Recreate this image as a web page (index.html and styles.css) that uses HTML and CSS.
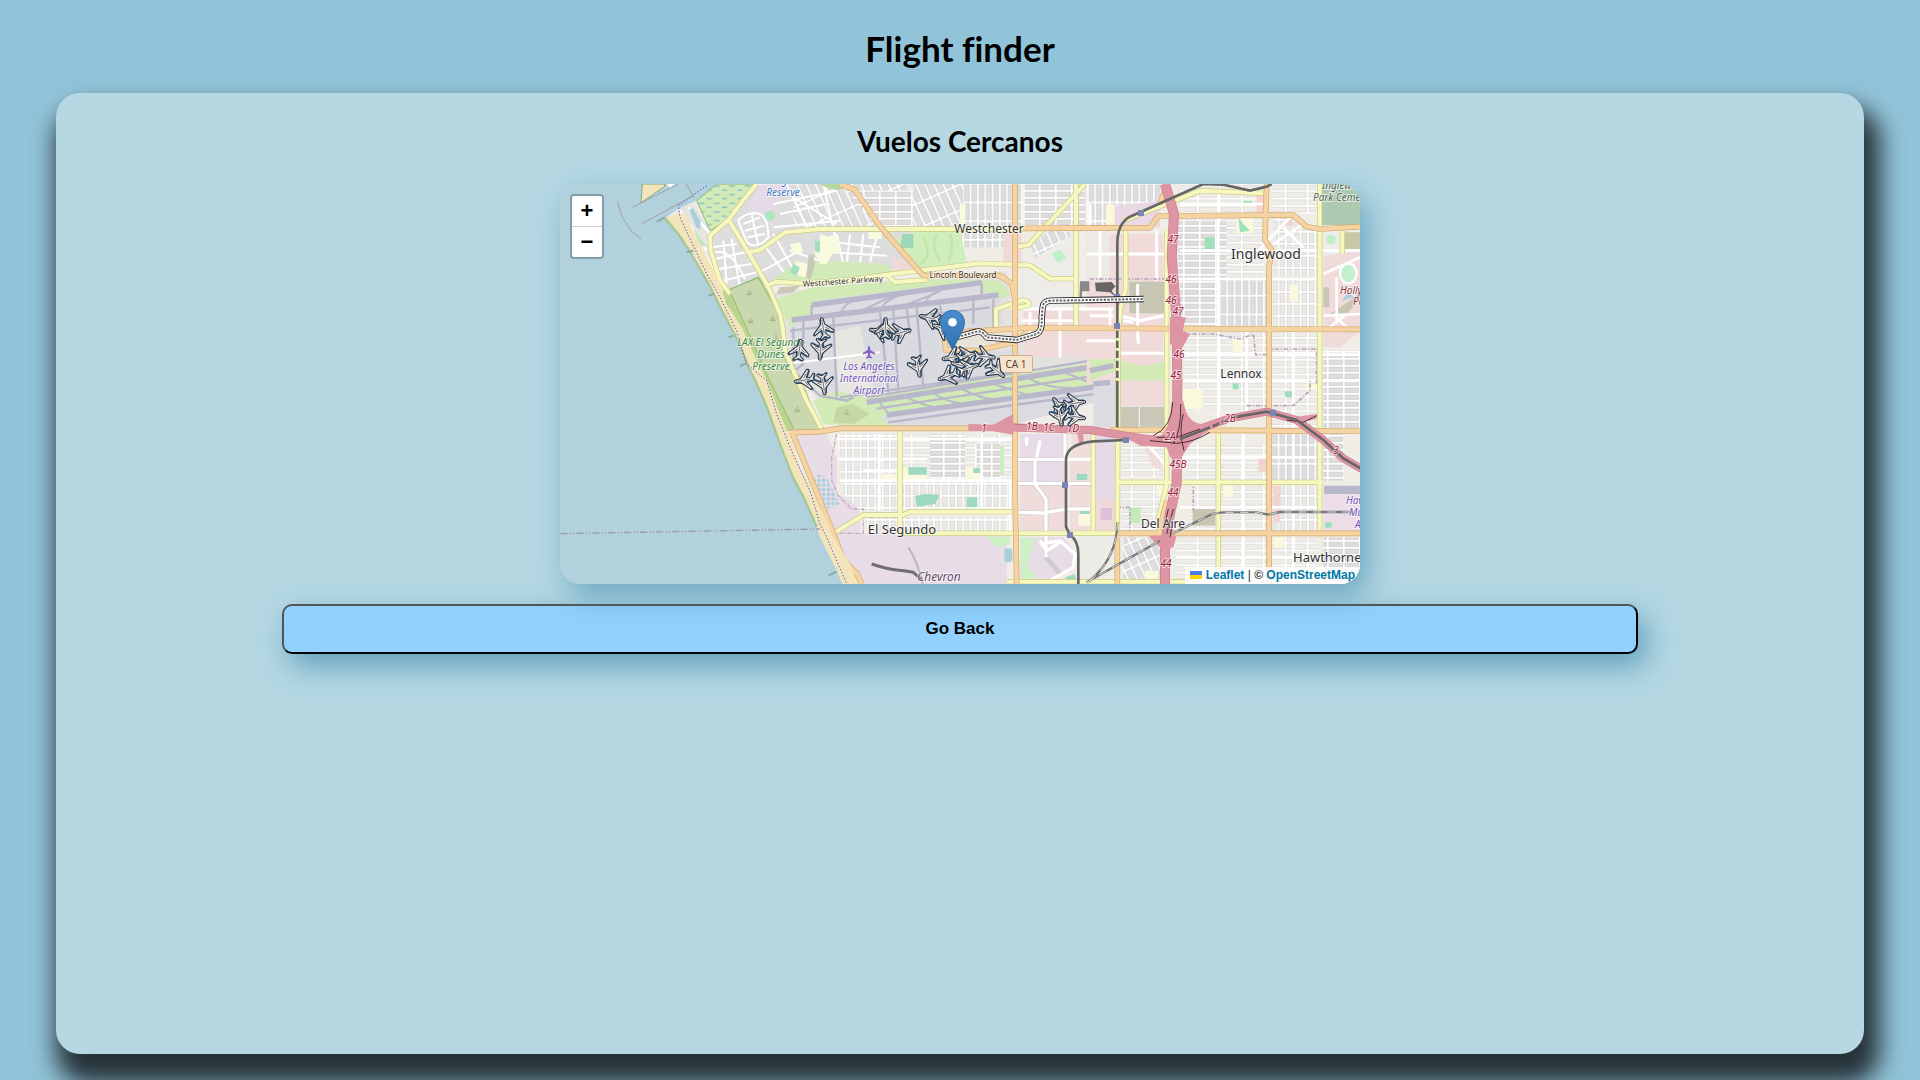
FILE: index.html
```html
<!DOCTYPE html>
<html lang="es">
<head>
<meta charset="utf-8">
<meta name="viewport" content="width=device-width, initial-scale=1">
<title>Flight finder</title>
<link rel="stylesheet" href="styles.css">
</head>
<body>
<header class="site-header"><h1 class="site-title">Flight finder</h1></header>
<main class="panel">
  <h2 class="panel-title">Vuelos Cercanos</h2>
  <div class="map">
    <svg class="map-canvas" viewBox="0 0 800 400" preserveAspectRatio="xMidYMid slice" role="img" aria-label="Mapa de vuelos cerca de Los Angeles International Airport">
      <defs>
        <pattern id="blocks-h" width="48" height="21" patternUnits="userSpaceOnUse"><rect width="48" height="21" fill="#fff"/><rect x="3" y="3" width="41" height="14" fill="#dfdddc" stroke="#c9c7c6" stroke-width="1.5"/></pattern>
        <pattern id="blocks-l" width="66" height="22" patternUnits="userSpaceOnUse"><rect width="66" height="22" fill="#fff"/><rect x="3" y="3" width="58" height="15" fill="#eeece6" stroke="#cfcdca" stroke-width="1.5"/></pattern>
        <pattern id="blocks-v" width="22" height="36" patternUnits="userSpaceOnUse"><rect width="22" height="36" fill="#fff"/><rect x="3" y="3" width="15" height="29" fill="#ebe9e5" stroke="#cbc9c7" stroke-width="1.5"/></pattern>
        <pattern id="blocks-g" width="22" height="56" patternUnits="userSpaceOnUse"><rect width="22" height="56" fill="#fff"/><rect x="3" y="3" width="15" height="49" fill="#dedddd" stroke="#c6c5c5" stroke-width="1.5"/></pattern>
        <pattern id="blocks-w" width="25" height="70" patternUnits="userSpaceOnUse" patternTransform="rotate(-24)"><rect width="25" height="70" fill="#fff"/><rect x="3" y="3" width="18" height="63" fill="#dedddd" stroke="#c6c5c5" stroke-width="1.5"/></pattern>
        <pattern id="marsh" width="46" height="26" patternUnits="userSpaceOnUse"><rect width="46" height="26" fill="#d2eab7"/><path d="M2 6h17M26 18h15" stroke="#5c9fd8" stroke-width="2.5"/></pattern>
        <pattern id="sand" width="9" height="9" patternUnits="userSpaceOnUse"><rect width="9" height="9" fill="#f5e8bf"/><path d="M2 2h2M6 6h2" stroke="#d9c48e" stroke-width="2"/></pattern>
        <pattern id="tanks" width="14" height="14" patternUnits="userSpaceOnUse"><circle cx="7" cy="7" r="5.5" fill="#a9cfdd"/></pattern>
        <linearGradient id="pin" x1="0" y1="0" x2="0" y2="1"><stop offset="0" stop-color="#4a8fd0"/><stop offset="1" stop-color="#2f6fb0"/></linearGradient>
        <symbol id="plane" viewBox="-34 -34 68 68" overflow="visible">
          <path d="M-4-34Q0-40 5-33L7-14 35 12 33 19 7 6 6 20 18 31 16 36 1 29-13 37-16 32-5 21-7 6-32 20-35 14-7-14Z" fill="#1f5c90" transform="translate(-4 3)"/>
          <path d="M-4-34Q0-40 5-33L7-14 35 12 33 19 7 6 6 20 18 31 16 36 1 29-13 37-16 32-5 21-7 6-32 20-35 14-7-14Z" fill="#e8e8e8" stroke="#2c3440" stroke-width="3.500"/>
          <path d="M0-24V18M-20 8-6-2M20 7 7-3M-3-28H4" fill="none" stroke="#6c6c6c" stroke-width="3"/>
        </symbol>
        <path id="arterials" d="M590 0 545 55 505 108 450 155 452 200 480 290 510 330M508 110 565 205 625 308 660 390 668 430 675 500 700 560 740 650 788 740M565 205 600 198 675 145 780 135H1390M625 303 650 293 725 298 870 288 980 272 1260 238 1410 244 1470 284H1545M980 272 1005 295 1100 287M1548 0V430M1575 0 1405 183 1370 188M1697 136V315L1682 370 1675 440 1672 1050M1690 110 1920 20 2110 28M1820 140V900L1795 1010M2279 0V1060M1975 748V1200M1675 895H2290M1600 748V1040M1020 738V1028M820 1048 910 993H1030L1050 983H1360M1010 1048H1670M1340 1193H1900M1308 430V375L1390 348Q1415 355 1405 365L1350 375M2347 140V210"/>
        <path id="primaries" d="M840 0 885 18 965 133 1070 253 1090 275H1320L1355 298 1363 340M1365 0V900L1370 1200M1390 133 1770 131 1795 96 2200 93 2240 128 2280 135 2400 128M2120 0 2115 168 2135 198 2127 248V1200M1152 455 1158 498 1250 500 1350 478 1400 445M1155 455 1230 442 1400 432 2400 436M690 746 780 743 840 733H1225M1650 738 2400 741M695 743 780 950 820 1048 850 1128 890 1168 905 1200M1675 1048H2400M1672 1060V1200M1822 0 1800 60M1820 950 1795 1050"/>
        <path id="rails" d="M1590 1190Q1672 1120 1672 1015M1580 1195 1800 1070M1835 1050 1950 993Q1965 985 2000 985H2090L2125 992 2160 984H2380"/>
        <path id="mover" d="M1192 459 1250 443Q1265 438 1280 460L1370 468 1430 450Q1448 440 1445 400L1448 370Q1450 350 1475 350L1590 348 1751 345"/>
      </defs>

      <rect width="800" height="400" fill="#b1d1dd"/>
      <g transform="scale(.333333)">
        <!-- land -->
        <path d="M470 0 410 50 355 75 315 103 357 153 390 203 450 308 485 378 530 463 565 548 585 588 620 668 665 793 700 883 730 938 770 1028 780 1058 830 1158 848 1200H2400V0Z" fill="#efede6"/>
        <path d="M247 0H315L313 8 243 56Z" fill="url(#sand)" stroke="#7cae80" stroke-width="3"/>
        <path d="M320 0 345 0 330 12Z" fill="#fff"/>

        <!-- residential, western side -->
        <path d="M505 108 590 0 800 0 1040 0 1060 253 960 255 800 290 620 300 520 335 480 290 450 160Z" fill="#dedddd"/>
        <path d="M700 0H1040L1050 130H700Z" fill="url(#blocks-w)"/>
        <path d="M600 0H700L640 70 600 95 560 80Z" fill="#e5dae5"/>
        <path d="M410 50 470 0H590L505 108 450 140Z" fill="url(#marsh)" stroke="#8bb37a" stroke-width="3"/>
        <path d="M345 78 400 60 450 140 438 175 490 300Z" fill="#e6e4df"/>
        <path d="M360 80 440 200M385 70 450 150M375 105 400 135M425 195 470 270" stroke="#fff" stroke-width="7" fill="none"/>
        <path d="M388 78 398 72 422 112 420 138 408 128Z" fill="#a8d0da"/>
        <path d="M398 128 440 190 420 185Z" fill="#bfe8bd"/>
        <g fill="none" stroke="#fff" stroke-width="6">
          <path d="M535 110Q555 85 590 88T625 160Q590 200 560 175ZM550 120 600 100M555 140 612 125M562 160 615 150M575 90 595 185"/>
          <path d="M455 190 530 180M465 225 555 205M475 255 575 240M490 290 590 265M490 170 500 300M515 165 540 315M465 205Q510 190 555 285"/>
          <path d="M680 0 740 130M640 150 720 290M600 265 700 210M610 180 690 290M690 200 810 240M640 60 830 20M700 40 830 120M660 90 800 60M790 0 830 180M640 130 840 110"/>
          <path d="M830 150 850 240M870 150 860 245M910 150 900 240M950 160 930 235M820 175 960 190M815 205 980 215M830 235 970 245"/>
        </g>
        <path d="M625 300 690 250 800 230 980 240 1000 265 800 290 660 296Z" fill="#d2eab7"/>
        <path d="M690 180 720 175 730 205 700 212ZM745 240 705 230 712 275 735 280ZM780 165 830 150 840 210 770 205ZM830 200 780 240 760 200Z" fill="#fafade"/>
        <circle cx="630" cy="95" r="15" fill="#aee5c0"/><path d="M765 170h30v35h-30zM700 240l20 10-10 25-20-10z" fill="#a4dfc2"/>

        <!-- residential, Westchester -->
        <path d="M860 20H1060L1100 130H950Z" fill="url(#blocks-h)"/>
        <path d="M1060 0H1210V130H1060Z" fill="url(#blocks-w)"/>
        <path d="M1210 0H1540V130H1210Z" fill="url(#blocks-g)"/>
        <path d="M1390 0H1575V130H1390Z" fill="url(#blocks-h)"/>
        <path d="M1130 145H1350V190H1140Z" fill="url(#blocks-g)"/>
        <path d="M1410 185 1470 140 1530 145V190L1440 250Z" fill="url(#blocks-w)"/>
        <path d="M1580 0H1800V130H1580Z" fill="url(#blocks-g)"/>
        <path d="M1200 60h16v60h-16zM780 150 840 170 800 240 780 240ZM925 145h40v20h-40z" fill="#fafade"/>
        <path d="M1070 140H1200L1220 235 1060 255 1000 170Z" fill="#d0eebb"/>
        <path d="M1090 160q30 60-10 80M1130 150q-20 40 10 80M1170 150q15 40-5 80" fill="none" stroke="#c2e5ae" stroke-width="8"/>
        <path d="M1028 150h32v42h-40z" fill="#9ed6ba"/>
        <path d="M1000 215 1060 250 1000 265ZM1330 140h55v110h-55z" fill="#f0d9d6"/>
        <path d="M1385 250 1540 150V410H1385Z" fill="#eeece8"/>
        <path d="M1475 210 1500 195 1518 220 1495 238Z" fill="#bff0c8"/>
        <path d="M780 0Q830 30 850 10V0Z" fill="#b9d8a0"/>

        <!-- airport -->
        <path d="M640 330 870 300 1340 262 1365 450 1680 430V620L1365 722 850 735 700 560 668 430Z" fill="#e3e2e0"/>
        <path d="M650 345 760 310 1090 285 1320 290 1350 330 1320 350 690 430Z" fill="#d2eab5"/>
        <path d="M760 350 1260 290V320L1320 335V355L700 430V415L760 400Z" fill="#dddce3"/>
        <path d="M840 390 1320 350 1330 420 1150 450 1150 510 1380 500 1360 560 960 625 840 640 700 560 690 440Z" fill="#dadae1"/>
        <path d="M820 445 900 425 940 620 840 630Z" fill="#e8e6e0"/>
        <path d="M900 640 1640 530 1680 600 980 730 790 720 760 650 830 620Z" fill="#d2eab5"/>
        <path d="M960 700 1365 650 1640 600 1660 640 1365 720 1000 725Z" fill="#dcdbe1"/>
        <path d="M880 660 930 690 880 720 820 715 830 670Z" fill="#c6d6a5"/>
        <path d="M1590 480H1670V580L1590 600Z" fill="#dcdbe1"/>
        <g fill="none" stroke="#b9b8ca">
          <path d="M755 363 1265 296M695 408 1315 333M920 655 1650 540M980 693 1650 603" stroke-width="16"/>
          <path d="M920 640 1640 522M985 715 1640 625M950 674 1640 570M690 440 1290 370M700 430V600M840 640 1360 565" stroke-width="7"/>
          <path d="M820 400 830 640M960 385 985 625M1000 380 1015 620M1070 370 1090 610M1040 375 1050 450M1140 365 1150 430M1240 350V420M1300 345V440M755 363V410M1265 296V340M730 400V540L690 570M880 640 860 650 780 635 700 560" stroke-width="7"/>
          <path d="M840 390Q860 345 910 345M960 375Q990 335 1040 330M900 382 1010 330M1090 365Q1110 320 1160 315M1020 370 1140 322M950 645 990 695M1040 640Q1080 660 1130 672M1120 625Q1150 655 1240 662M1200 612Q1270 650 1330 648M1300 600 1400 632M1400 580Q1460 615 1540 612M1500 560 1600 600M1360 590V690" stroke-width="6"/>
        </g>
        <path d="M675 540 960 505" stroke="#fff" stroke-width="6"/>
        <path d="M1170 450 1330 430 1370 450 1340 480 1165 495Z" fill="#e9e2d8"/>
        <path d="M660 310 720 305 700 325 650 330ZM745 215 760 210 765 240 750 290 740 280Z" fill="#c9c7b5"/>

        <!-- dunes preserve -->
        <path d="M505 318 595 280 650 378 664 430 670 500 690 560 735 618 783 738 690 740 625 588 560 440Z" fill="#cad8af" stroke="#94b972" stroke-width="4"/>
        <path d="M495 318 550 440 615 588 690 738" fill="none" stroke="#98b36a" stroke-width="26"/>
        <path d="M495 318 550 440 615 588 690 738" fill="none" stroke="#b9d68f" stroke-width="21"/>
        <path d="M558 332h20M568 332v-16M568 332l-8-9M568 332l8-9M562 416h20M572 416v-16M572 416l-8-9M572 416l8-9M628 410h20M638 410v-16M638 410l-8-9M638 410l8-9M702 683h20M712 683v-16M712 683l-8-9M712 683l8-9M640 466h16M648 466v-16M850 690h20M860 690v-14" fill="none" stroke="#a5b484" stroke-width="3"/>

        <!-- El Segundo -->
        <path d="M700 750 800 750 830 820V930L900 960V1048H1340V1200H905L850 1128 780 950Z" fill="#e8dce7"/>
        <path d="M770 870 800 880 840 960 800 975 760 900Z" fill="url(#tanks)"/>
        <path d="M830 750H1010V980H900L850 930Z" fill="url(#blocks-v)"/>
        <path d="M1030 750H1355V885H1030Z" fill="url(#blocks-l)"/>
        <path d="M1110 750H1215V885H1110ZM1245 780H1320V885H1245Z" fill="url(#blocks-h)"/>
        <path d="M960 895H1355V975H960ZM920 1000H1350V1040H920Z" fill="url(#blocks-v)"/>
        <path d="M1030 850h70v40h-70zM1218 850h44v38h-44zM965 870h45v20h-45z" fill="#faf9dd"/>
        <path d="M1045 850h55v22h-55zM1240 852h22v15h-22zM1065 935 1100 930 1140 932 1125 960 1070 968ZM1220 940h32v30h-32z" fill="#9cd9bf"/>
        <rect x="1320" y="785" width="12" height="90" fill="#cdecc2"/>
        <path d="M830 750 815 820V890L835 935 875 975H910V1048H820" fill="none" stroke="#c3a9c3" stroke-width="4" stroke-dasharray="12 4 3 4"/>
        <path d="M1380 750H1520V930H1380Z" fill="#e7dbe7"/>
        <path d="M1380 900H1520V1040H1380Z" fill="#f0dcdb"/>
        <path d="M1530 810H1590V1040H1530ZM1535 750H1660V810H1535Z" fill="#efdcdb"/>
        <path d="M1605 750H1665V945H1605Z" fill="#e6dae7"/>
        <path d="M1605 945H1668V1040H1605Z" fill="#efd9da"/><rect x="1622" y="972" width="34" height="36" fill="#dcc2d8"/>
        <path d="M1380 1060H1510L1550 1110 1545 1150 1460 1200H1380Z" fill="#e8dce7"/>
        <path d="M1280 1058H1350V1080L1310 1090ZM1380 1060 1425 1065 1400 1140 1430 1180 1385 1200Z" fill="#cdf0c4"/>
        <rect x="1333" y="1093" width="24" height="42" rx="10" fill="#a9cfdd"/>
        <path d="M1550 870h32v18h-32zM1560 970h28v20h-28zM1515 1180 1545 1170 1550 1200H1520Z" fill="#9cd9bf"/>
        <path d="M1555 990h40v35h-40z" fill="#faf9dd"/>
        <path d="M1560 1055H1660L1600 1180 1560 1200Z" fill="#eceae4"/>
        <path d="M1370 826H1500M1425 826V900L1458 945V1120L1500 1170M1370 898H1600M1370 985 1450 987 1520 975H1590M1515 750V820" fill="none" stroke="#cfcccc" stroke-width="14"/>
        <path d="M1370 826H1600M1425 826V900L1458 945V1120M1370 898H1600M1370 985 1450 987 1520 975H1590M1515 750V820M1400 760V785M1440 770 1430 820M1440 1080 1500 1070 1545 1110 1540 1150 1460 1195M1440 1070 1460 1100 1500 1075" fill="none" stroke="#fff" stroke-width="10"/>
        <path d="M830 765H1355M840 890H1355M958 750V980M1265 750V970M835 825H1100M910 860H1020M1350 890V1040" fill="none" stroke="#fff" stroke-width="8"/>
        <path d="M1045 1090Q1072 1130 1088 1200" fill="none" stroke="#bbb" stroke-width="6"/>
        <path d="M935 1140Q980 1155 1010 1158T1060 1165L1088 1190" fill="none" stroke="#6f6f6f" stroke-width="9"/>

        <!-- commercial belt -->
        <path d="M1580 150H1810V600H1580ZM1390 375H1660V520H1390Z" fill="#f0dbda"/>
        <path d="M1640 70 1800 50V130H1640Z" fill="#ead9e4"/>
        <path d="M1580 140H1650V290H1580Z" fill="#edeae4"/>
        <path d="M1638 62h26v60h-26z" fill="#faf9dd"/>
        <rect x="1708" y="293" width="114" height="95" fill="#c7c6b3"/>
        <path d="M1590 525H1670V560L1590 590ZM1680 530 1700 535 1740 545 1812 535V590H1680Z" fill="#d2eab5"/>
        <path d="M1680 590H1815V665H1680Z" fill="#f0dbda"/><path d="M1682 668h54v66h-54zM1740 668h75v60h-75z" fill="#c9c8b6"/>
        <path d="M1600 590H1672V730H1600Z" fill="#dddce3"/>
        <path d="M1590 560 1660 545M1600 600 1650 595" stroke="#b9b8ca" stroke-width="16"/>
        <path d="M1685 780H1810V880H1685ZM1685 905H1800V1040H1685Z" fill="url(#blocks-l)"/>
        <path d="M1755 790 1790 800 1810 860 1780 850Z" fill="#f0dbda"/>
        <path d="M1708 970h34v46h-34z" fill="#c5e9b8"/><path d="M1790 905h26v30h-26z" fill="#faf9dd"/>
        <path d="M1690 1060H1800V1200H1690Z" fill="url(#blocks-w)"/>
        <path d="M1580 210H1820M1590 395H1660M1680 395 1740 410 1810 395M1733 300V470M1690 410 1720 415M1580 470H1680M1680 508H1820M1620 140V280M1650 370V440M1410 385V450M1385 410H1540M1500 375V520M1390 375H1660M1735 455V480M1790 140V290M1765 785 1815 840M1590 60V130" fill="none" stroke="#fff" stroke-width="9"/>
        <path d="M1605 296 1655 294 1668 310V340L1650 325 1608 322ZM1655 320 1672 345V300Z" fill="#666"/><path d="M1560 292h28v30h-22v35h-8z" fill="#888"/>

        <!-- Inglewood, Lennox, Hawthorne -->
        <path d="M1860 0H2110V195H1860Z" fill="url(#blocks-l)"/>
        <path d="M1855 110H2000V290H1855Z" fill="url(#blocks-h)"/>
        <path d="M2000 110H2110V290H2000Z" fill="url(#blocks-l)"/>
        <path d="M1860 290H1975V440H1860Z" fill="url(#blocks-h)"/><path d="M1980 290H2120V430H1980Z" fill="url(#blocks-g)"/>
        <path d="M2135 0H2275V90H2135Z" fill="url(#blocks-l)"/>
        <path d="M2140 100 2200 95 2275 140V280H2140Z" fill="url(#blocks-v)"/>
        <path d="M2140 290H2275V430H2140Z" fill="url(#blocks-v)"/>
        <path d="M1870 445H2120V680H1870Z" fill="url(#blocks-l)"/>
        <path d="M2135 445H2275V735H2135Z" fill="url(#blocks-l)"/>
        <path d="M2290 500H2400V735H2290Z" fill="url(#blocks-h)"/>
        <path d="M1880 780H2120V890H1880ZM1890 905H2120V1040H1890Z" fill="url(#blocks-l)"/>
        <path d="M2135 750H2275V890H2135Z" fill="url(#blocks-g)"/><path d="M2135 905H2275V1040H2135Z" fill="url(#blocks-v)"/>
        <path d="M1850 1060H2120V1200H1850ZM2135 1060H2275V1200H2135Z" fill="url(#blocks-l)"/>
        <path d="M2290 1060H2400V1200H2290ZM2290 750H2350V890H2290Z" fill="url(#blocks-h)"/>
        <path d="M2290 930H2400V1040H2290Z" fill="#ecdde6"/>
        <path d="M2292 905H2400V930H2292Z" fill="#b9b8ca"/>
        <rect x="2285" y="0" width="115" height="123" fill="#adcab0"/>
        <path d="M2290 140H2400V210H2290Z" fill="#efede7"/><circle cx="2313" cy="167" r="14" fill="#bdf0c8"/><path d="M2350 145h50v50h-50z" fill="#c5c9a8"/>
        <path d="M2290 215 2400 200V440L2340 490H2290Z" fill="#f0dbda"/>
        <ellipse cx="2365" cy="268" rx="25" ry="30" fill="#c5efcf" stroke="#fff" stroke-width="7"/>
        <path d="M2310 390 2370 350 2400 320V345L2360 390ZM2290 310h18v60h-18z" fill="#c7c6b3"/><path d="M2345 350 2365 325 2380 340Z" fill="#a9cfdd"/>
        <path d="M2030 103h50v45h-50zM2045 45h36v22h-36zM2190 302h24v52h-24zM2018 465h28v45h-28zM1868 615h60v60h-60zM2140 1060h34v30h-34zM1755 1160h40v30h-40zM2235 600h40v15h-40zM1990 905h30v35h-30z" fill="#faf9dd"/>
        <path d="M1934 160h30v36h-30zM2035 100 2050 120 2070 140 2040 145ZM2050 50h28v10h-28zM2175 622h22v18h-22zM2018 598h18v18h-18zM2295 1015h20v16h-20z" fill="#9edfbd"/>
        <path d="M2095 822h30v42h-30zM2140 905h20v110h-20zM2090 30h30v60h-30zM2175 100h25v25h-25z" fill="#f3d3d0"/>
        <rect x="1898" y="975" width="68" height="50" fill="#c7c6b3"/>
        <path d="M1860 200H2400M1850 285H2270M1860 512H2400M1870 590H2400M1975 20V740M2060 440V680M2200 440V1200M1860 60H2110M1860 820H2280M2050 750V1200M1860 970H2280M1850 1120H2280M2095 200 2200 90M2140 180 2230 120M2170 130 2230 190M2290 395 2400 390M2310 430 2360 390M2320 390 2360 430M2290 270 2400 220M2330 280 2330 420" fill="none" stroke="#fff" stroke-width="8"/>
        <path d="M1590 285H1830M1870 450 1960 450 2040 465 2080 450 2087 512H2130V495H2270V600M1670 970H1710V1048H1970V1200M1900 890V980M2060 665H2200L2250 620V590" fill="none" stroke="#b9a3b8" stroke-width="5" stroke-dasharray="13 5 4 5"/>

        <!-- road casings, then fills -->
        <g fill="none" stroke-linejoin="round">
          <use href="#arterials" stroke="#c9ca82" stroke-width="16"/>
          <use href="#arterials" stroke="#f6f8c0" stroke-width="12"/>
          <use href="#primaries" stroke="#d2a86c" stroke-width="17"/>
          <use href="#primaries" stroke="#f6d3a2" stroke-width="13"/>
        </g>

        <!-- freeways -->
        <g fill="none" stroke="#cf7d8e" stroke-width="30" stroke-linejoin="round">
          <path d="M1815 0 1842 90 1835 218 1850 410 1852 590 1850 898 1830 988 1815 1088V1200"/><path d="M1360 730 1590 738 1740 762 1820 772 1890 745 2010 703 2120 683 2210 708 2290 768 2350 823 2405 855" stroke-width="24"/>
        </g>
        <path d="M1225 720 1300 722 1360 690V752L1300 742 1225 742ZM1830 400H1878L1868 440 1890 450 1868 490 1860 500 1830 480ZM1870 650Q1880 720 1930 720L2000 700 1890 780 1865 820H1830L1820 790 1740 785 1680 750 1800 755Q1830 740 1835 650ZM1765 1055 1850 1055 1840 1090 1810 1100ZM1550 740h20v40h-12zM2200 700 2270 690V705L2220 715Z" fill="#dd95a3"/>
        <g fill="none" stroke="#dd95a3" stroke-width="26" stroke-linejoin="round">
          <path d="M1815 0 1842 90 1835 218 1850 410 1852 590 1850 898 1830 988 1815 1088V1200"/><path d="M1300 731 1590 738 1740 762 1820 772 1890 745 2010 703 2120 683 2210 708 2290 768 2350 823 2405 855" stroke-width="20"/>
        </g>
        <path d="M1838 655Q1836 730 1780 755M1862 660Q1864 740 1840 780M1870 690Q1855 740 1872 800M1770 770 1850 778Q1900 775 1950 745M1790 760H1850L1920 735M1840 975 1820 1050M1825 975 1812 1030M1835 1030 1830 1060M2180 708 2230 715 2270 695" fill="none" stroke="#4e2b36" stroke-width="3"/>

        <!-- railways and people mover -->
        <g fill="none" stroke="#666" stroke-width="8"><path d="M1930 0 1710 98Q1672 118 1672 180V430M1930 0 1990 2 2070 20 2120 8 2135 0M1672 600V730M1860 765 1930 738M2020 700 2120 683 2210 708 2290 768 2350 823 2405 855M1700 768 1600 772Q1518 780 1518 828V1028L1530 1053Q1555 1070 1555 1110V1200"/><path d="M1672 440V600M1930 738 2010 705" stroke-dasharray="22 8"/></g>
        <g fill="none"><use href="#rails" stroke="#777" stroke-width="7"/><use href="#rails" stroke="#ddd" stroke-width="3" stroke-dasharray="24 20"/></g>
        <path d="M1734 78h18v18h-18zM1662 330h18v18h-18zM1662 417h18v18h-18zM1689 759h18v18h-18zM2130 677h18v18h-18zM1506 894h18v18h-18zM1521 1044h18v18h-18z" fill="#7c83b5"/>
        <g fill="none" stroke-linejoin="round"><use href="#mover" stroke="#222" stroke-width="19"/><use href="#mover" stroke="#fff" stroke-width="14"/><use href="#mover" stroke="#666" stroke-width="6" stroke-dasharray="7 4"/></g>

        <!-- beach, piers, boundaries -->
        <path d="M315 103 340 92 372 88 395 130 420 180 475 285 500 360 545 430 590 530 625 600 660 690 690 760 720 850 760 930 800 1010 815 1050 870 1140 893 1200H848L830 1158 780 1058 770 1028 730 938 700 883 665 793 620 668 585 588 565 548 530 463 485 378 450 308 390 203 357 153Z" fill="url(#sand)"/>
        <path d="M315 103 357 153 390 203 450 308 485 378 530 463 565 548 585 588 620 668 665 793 700 883 730 938 770 1028" fill="none" stroke="#a5c795" stroke-width="7"/>
        <path d="M440 5 355 65 360 100 440 270 480 340 530 440 560 540 620 590 650 690 690 790 750 920 780 1020 800 1060 860 1200" fill="none" stroke="#4f45d8" stroke-width="3" stroke-dasharray="4 6"/>
        <path d="M218 70 355 0M245 120 400 35M172 52 187 100 213 140 243 166M378 0 402 40" fill="none" stroke="#a79b9f" stroke-width="3"/>
        <path d="M380 205 400 200M445 335 462 330M505 460 520 455M540 546 560 538M290 113 315 100M805 1175 830 1163" stroke="#8fa9a5" stroke-width="6"/>
        <path d="M0 1049 780 1035" fill="none" stroke="#9d98ae" stroke-width="4" stroke-dasharray="22 6 4 6 4 6"/>
      </g>

      <!-- place names -->
      <g class="label">
        <g class="town"><text x="429" y="49">Westchester</text><text x="681" y="194">Lennox</text><text x="603" y="344">Del Aire</text><text x="342" y="350" class="town-mid">El Segundo</text><text x="706" y="75" class="town-large">Inglewood</text><text x="733" y="378" class="town-mid from-start">Hawthorne</text></g>
        <g class="place nature"><text x="211" y="162">LAX El Segundo</text><text x="211" y="174">Dunes</text><text x="211" y="186">Preserve</text></g>
        <g class="place aero"><text x="309" y="186">Los Angeles</text><text x="309" y="198">International</text><text x="309" y="210">Airport</text><text x="786" y="320" class="from-start">Hawthorne</text><text x="789" y="332" class="from-start">Municipal</text><text x="795" y="344" class="from-start">Airport</text></g>
        <g class="place wetland"><text x="220" y="0">Ecological</text><text x="223" y="12">Reserve</text></g>
        <g class="place cemetery"><text x="762" y="5" class="from-start">Inglewood</text><text x="753" y="17" class="from-start">Park Cemetery</text></g>
        <g class="place leisure"><text x="780" y="110" class="from-start">Hollywood</text><text x="793" y="121" class="from-start">Park</text></g>
        <text x="379" y="397" class="industry">Chevron</text>
        <g class="street"><text x="403" y="94">Lincoln Boulevard</text><text x="283" y="100" transform="rotate(-4 283 100)">Westchester Parkway</text></g>
        <g class="exit"><text x="613" y="59">47</text><text x="611" y="99">46</text><text x="611" y="120">46</text><text x="618" y="131">47</text><text x="619" y="174">46</text><text x="616" y="195">45</text><text x="424" y="248">1</text><text x="472" y="246">1B</text><text x="489" y="247">1C</text><text x="513" y="248">1D</text><text x="670" y="238">2B</text><text x="610" y="256">2A</text><text x="776" y="270">3</text><text x="618" y="284">45B</text><text x="613" y="312">44</text><text x="606" y="383">44</text></g>
      </g>
      <path d="M309 162c1 0 1.200 2 1.200 4l5 3v1.500l-5-1.500v3l1.800 1.500v1l-3-.8-3 .8v-1l1.800-1.500v-3l-5 1.500V169l5-3c0-2 .2-4 1.200-4Z" fill="#8461c4"/>
      <rect x="439.500" y="171.500" width="33" height="17" rx="2" fill="#f6e3cc" stroke="#d0b08c"/>
      <text x="456" y="184" class="shield">CA 1</text>

      <!-- live aircraft -->
      <g transform="scale(.333333)">
        <use href="#plane" x="-30" y="-30" width="60" height="60" transform="translate(790 433) rotate(-10)"/>
        <use href="#plane" x="-30" y="-30" width="60" height="60" transform="translate(718 498) rotate(8)"/>
        <use href="#plane" x="-30" y="-30" width="60" height="60" transform="translate(782 496) rotate(185)"/>
        <use href="#plane" x="-30" y="-30" width="60" height="60" transform="translate(735 588) rotate(-100)"/>
        <use href="#plane" x="-30" y="-30" width="60" height="60" transform="translate(790 600) rotate(172)"/>
        <use href="#plane" x="-30" y="-30" width="60" height="60" transform="translate(960 442) rotate(-80)"/>
        <use href="#plane" x="-30" y="-30" width="60" height="60" transform="translate(1022 446) rotate(75)"/>
        <use href="#plane" x="-30" y="-30" width="60" height="60" transform="translate(976 433) rotate(2)"/>
        <use href="#plane" x="-30" y="-30" width="60" height="60" transform="translate(1110 402) rotate(-78)"/>
        <use href="#plane" x="-30" y="-30" width="60" height="60" transform="translate(1148 434) rotate(-70)"/>
        <use href="#plane" x="-30" y="-30" width="60" height="60" transform="translate(1074 548) rotate(170)"/>
        <use href="#plane" x="-30" y="-30" width="60" height="60" transform="translate(1178 520) rotate(-100)"/>
        <use href="#plane" x="-30" y="-30" width="60" height="60" transform="translate(1222 515) rotate(75)"/>
        <use href="#plane" x="-30" y="-30" width="60" height="60" transform="translate(1274 518) rotate(95)"/>
        <use href="#plane" x="-30" y="-30" width="60" height="60" transform="translate(1205 545) rotate(-75)"/>
        <use href="#plane" x="-30" y="-30" width="60" height="60" transform="translate(1165 576) rotate(-110)"/>
        <use href="#plane" x="-30" y="-30" width="60" height="60" transform="translate(1225 552) rotate(70)"/>
        <use href="#plane" x="-30" y="-30" width="60" height="60" transform="translate(1308 558) rotate(130)"/>
        <use href="#plane" x="-30" y="-30" width="60" height="60" transform="translate(1498 668) rotate(-35)"/>
        <use href="#plane" x="-30" y="-30" width="60" height="60" transform="translate(1545 658) rotate(80)"/>
        <use href="#plane" x="-30" y="-30" width="60" height="60" transform="translate(1545 698) rotate(100)"/>
        <use href="#plane" x="-30" y="-30" width="60" height="60" transform="translate(1500 695) rotate(170)"/>
      </g>
      <!-- position pin -->
      <path d="M392.500 165.500 400 151.500Q404.500 144 404.500 138.300A12 12 0 0 0 380.500 138.300Q380.500 144 385 151.500Z" fill="url(#pin)" stroke="#2e6ca6"/>
      <circle cx="392.500" cy="138.300" r="4.300" fill="#fff"/>
    </svg>
    <div class="zoom-control">
      <button type="button" class="zoom-button" aria-label="Zoom in">+</button>
      <button type="button" class="zoom-button" aria-label="Zoom out">−</button>
    </div>
    <div class="attribution">
      <svg class="flag" viewBox="0 0 12 8" aria-hidden="true"><path fill="#4c7be1" d="M0 0h12v4H0z"/><path fill="#ffd500" d="M0 4h12v4H0z"/></svg>
      <a href="https://leafletjs.com">Leaflet</a> <span class="divider">|</span> © <a href="https://www.openstreetmap.org/copyright">OpenStreetMap</a>
    </div>
  </div>
  <button type="button" class="back-button">Go Back</button>
</main>
</body>
</html>
```
FILE: styles.css
```css
* { box-sizing: border-box; }

body {
  min-height: 100vh;
  margin: 0;
  padding-bottom: 26px;
  background: #92c4d9;
  color: #000;
  font-family: Lato, "Open Sans", sans-serif;
  font-weight: bold;
  font-variant-ligatures: none;
}

.site-header { padding: 24px 16px 21px; text-align: center; }

.site-title { margin: 0; font-size: 35px; line-height: 48px; }

.panel {
  display: flex;
  flex-direction: column;
  align-items: center;
  min-height: 89vh;
  margin: 0 56px;
  padding: 28px 0 24px;
  border-radius: 24px;
  background: #b5d8e3;
  box-shadow: 8px 22px 25px 8px rgba(0, 0, 0, .75);
}

.panel-title { margin: 0 0 23px; font-size: 28px; line-height: 40px; }

.map {
  position: relative;
  width: 100%;
  max-width: 800px;
  aspect-ratio: 2 / 1;
  margin-bottom: 20px;
  overflow: hidden;
  border-radius: 20px;
  background: #b1d1dd;
  box-shadow: 8px 12px 30px rgba(60, 135, 170, .6);
}

.map-canvas { display: block; width: 100%; height: 100%; }

.label text {
  text-anchor: middle;
  font-family: "Noto Sans", sans-serif;
  font-weight: normal;
  paint-order: stroke;
  stroke: rgba(255, 255, 255, .6);
  stroke-width: 2px;
}

.label .from-start { text-anchor: start; }
.town { font-size: 12px; fill: #333; }
.town-mid { font-size: 13px; }
.town-large { font-size: 14px; }
.place { font-size: 10px; font-style: italic; }
.nature { fill: #3b8a45; }
.aero { fill: #7556bb; }
.wetland { fill: #3f7fc4; }
.cemetery { fill: #53665a; }
.leisure { fill: #8a3c45; }
.industry { font-size: 12px; font-style: italic; fill: #6b4f70; }
.street { font-size: 8px; fill: #3b3320; }
.exit { font-size: 10px; font-style: italic; fill: #962440; }

.shield {
  text-anchor: middle;
  font-family: "Noto Sans", sans-serif;
  font-size: 10px;
  font-weight: normal;
  fill: #5c4630;
}

.zoom-control {
  position: absolute;
  top: 10px;
  left: 10px;
  display: flex;
  flex-direction: column;
  border: 2px solid rgba(0, 0, 0, .25);
  border-radius: 4px;
  background-clip: padding-box;
}

.zoom-button {
  width: 30px;
  height: 30px;
  padding: 0;
  border: 0;
  background: #fff;
  color: #000;
  font: bold 22px/30px "Liberation Sans", Arial, sans-serif;
}

.zoom-button:first-child {
  height: 31px;
  border-bottom: 1px solid #ccc;
  border-radius: 2px 2px 0 0;
}

.zoom-button:last-child { border-radius: 0 0 2px 2px; }

.attribution {
  position: absolute;
  right: 0;
  bottom: 0;
  padding: 0 5px;
  background: rgba(255, 255, 255, .8);
  color: #333;
  font: bold 12px/17px "Liberation Sans", Arial, sans-serif;
}

.attribution a { color: #0078a8; text-decoration: none; }

.divider { font-weight: normal; }

.flag { width: 12px; height: 8px; }

.back-button {
  width: 75%;
  height: 50px;
  border: 2px outset #000;
  border-radius: 10px;
  background: #92d1fd;
  color: #000;
  font: bold 17px "Liberation Sans", Arial, sans-serif;
  box-shadow: 8px 12px 30px rgba(60, 135, 170, .7);
}
```
